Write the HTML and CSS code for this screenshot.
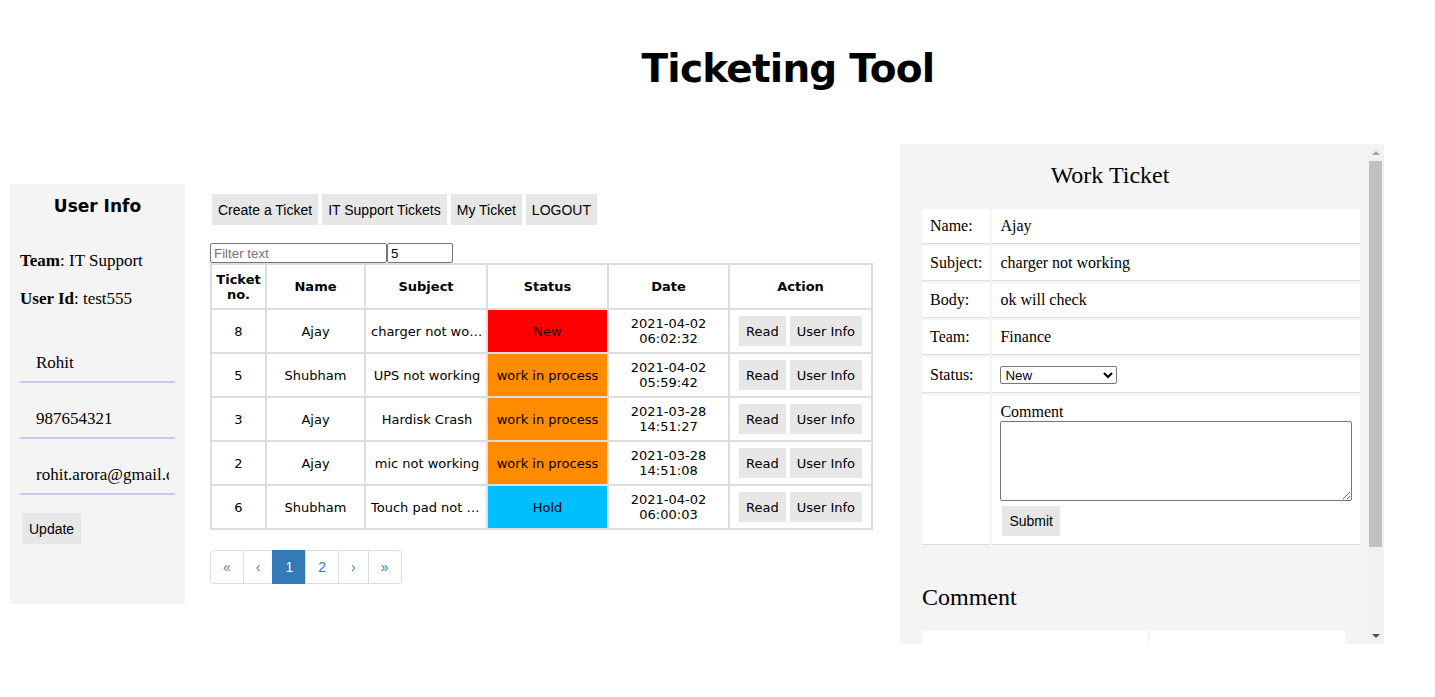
FILE: index.html
```html
<!DOCTYPE html>
<html lang="en">

<head>
    <meta charset="UTF-8">
    <meta name="viewport" content="width=device-width, initial-scale=1.0">
    <title>Ticketing Tool</title>
    <link rel="stylesheet" href="styles.css">
</head>

<body>
    <h1 class="title">Ticketing Tool</h1>

    <div class="main">
        <div class="userinfo">
            <h3>User Info</h3>
            <p><b>Team</b>: IT Support</p>
            <p class="userid"><b>User Id</b>: test555</p>
            <input class="field first" type="text" value="Rohit">
            <input class="field" type="text" value="987654321">
            <input class="field" type="text" value="rohit.arora@gmail.com">
            <button class="btn update">Update</button>
        </div>

        <div class="content">
            <div class="nav">
                <button class="btn">Create a Ticket</button>
                <button class="btn">IT Support Tickets</button>
                <button class="btn">My Ticket</button>
                <button class="btn">LOGOUT</button>
            </div>
            <div class="filter">
                <input class="filtertext" type="text" placeholder="Filter text">
                <input class="pagesize" type="text" value="5">
            </div>
            <table class="tickets">
                <colgroup>
                    <col style="width:55px">
                    <col style="width:99px">
                    <col style="width:122px">
                    <col style="width:121px">
                    <col style="width:121px">
                    <col style="width:143px">
                </colgroup>
                <tr>
                    <th>Ticket no.</th>
                    <th>Name</th>
                    <th>Subject</th>
                    <th>Status</th>
                    <th>Date</th>
                    <th>Action</th>
                </tr>
                <tr>
                    <td>8</td>
                    <td>Ajay</td>
                    <td class="subject">charger not working</td>
                    <td class="new">New</td>
                    <td>2021-04-02 06:02:32</td>
                    <td><button class="act">Read</button><button class="act">User Info</button></td>
                </tr>
                <tr>
                    <td>5</td>
                    <td>Shubham</td>
                    <td class="subject">UPS not working</td>
                    <td class="process">work in process</td>
                    <td>2021-04-02 05:59:42</td>
                    <td><button class="act">Read</button><button class="act">User Info</button></td>
                </tr>
                <tr>
                    <td>3</td>
                    <td>Ajay</td>
                    <td class="subject">Hardisk Crash</td>
                    <td class="process">work in process</td>
                    <td>2021-03-28 14:51:27</td>
                    <td><button class="act">Read</button><button class="act">User Info</button></td>
                </tr>
                <tr>
                    <td>2</td>
                    <td>Ajay</td>
                    <td class="subject">mic not working</td>
                    <td class="process">work in process</td>
                    <td>2021-03-28 14:51:08</td>
                    <td><button class="act">Read</button><button class="act">User Info</button></td>
                </tr>
                <tr>
                    <td>6</td>
                    <td>Shubham</td>
                    <td class="subject">Touch pad not working</td>
                    <td class="hold">Hold</td>
                    <td>2021-04-02 06:00:03</td>
                    <td><button class="act">Read</button><button class="act">User Info</button></td>
                </tr>
            </table>
            <ul class="pagination">
                <li class="disabled">&laquo;</li>
                <li class="disabled">&lsaquo;</li>
                <li class="active">1</li>
                <li>2</li>
                <li>&rsaquo;</li>
                <li>&raquo;</li>
            </ul>
        </div>

        <div class="work">
            <div class="workbody">
                <h2 class="worktitle">Work Ticket</h2>
                <table class="detail">
                    <tr>
                        <td class="label">Name:</td>
                        <td>Ajay</td>
                    </tr>
                    <tr>
                        <td class="label">Subject:</td>
                        <td>charger not working</td>
                    </tr>
                    <tr>
                        <td class="label">Body:</td>
                        <td>ok will check</td>
                    </tr>
                    <tr>
                        <td class="label">Team:</td>
                        <td>Finance</td>
                    </tr>
                    <tr>
                        <td class="label">Status:</td>
                        <td>
                            <select class="status">
                                <option>New</option>
                                <option>work in process</option>
                                <option>Hold</option>
                                <option>Closed</option>
                            </select>
                        </td>
                    </tr>
                    <tr>
                        <td class="label"></td>
                        <td class="commentcell">
                            <div>Comment</div>
                            <textarea class="commentbox"></textarea>
                            <button class="btn submit">Submit</button>
                        </td>
                    </tr>
                </table>
                <h2 class="commenttitle">Comment</h2>
                <table class="comments">
                    <tr>
                        <td class="who">Ajay</td>
                        <td>ok will check</td>
                    </tr>
                    <tr>
                        <td class="who">test555</td>
                        <td>checking</td>
                    </tr>
                </table>
            </div>
            <div class="scrollbar">
                <div class="sbbtn"><span class="arrowup"></span></div>
                <div class="sbtrack">
                    <div class="sbthumb"></div>
                </div>
                <div class="sbbtn"><span class="arrowdown"></span></div>
            </div>
        </div>
    </div>
</body>

</html>
```

FILE: styles.css
```css
body {
    margin: 0;
    font-family: "Liberation Serif", serif;
    font-size: 16px;
    color: #000;
}

.title {
    font-family: "DejaVu Sans", sans-serif;
    font-size: 39px;
    letter-spacing: -0.8px;
    line-height: 46px;
    text-align: center;
    margin: 46px 0 52px;
    padding-left: 141px;
}

.main {
    display: flex;
    align-items: flex-start;
    padding-left: 10px;
}

/* left user panel */
.userinfo {
    width: 175px;
    height: 420px;
    box-sizing: border-box;
    margin-top: 40px;
    padding: 12px 10px;
    background: #f4f4f4;
}

.userinfo h3 {
    margin: 0;
    font-family: "DejaVu Sans", sans-serif;
    font-size: 17px;
    line-height: 20px;
    text-align: center;
}

.userinfo p {
    margin: 35px 0 0;
    font-size: 17px;
    line-height: 19px;
}

.userinfo .userid {
    margin-top: 19px;
}

.field {
    display: block;
    width: 155px;
    height: 38px;
    box-sizing: border-box;
    margin: 18px 0 0;
    padding: 0 6px 0 16px;
    border: none;
    border-bottom: 2px solid #cfc6ec;
    background: transparent;
    font-family: "Liberation Serif", serif;
    font-size: 17px;
    color: #000;
    outline: none;
}

.field.first {
    margin-top: 37px;
}

.btn {
    height: 31px;
    padding: 0 7px;
    border: none;
    background: #e7e7e7;
    font-family: "Liberation Sans", Arial, sans-serif;
    font-size: 14px;
    color: #000;
    cursor: pointer;
}

.update {
    display: block;
    margin: 18px 0 0 2px;
}

/* middle ticket list */
.content {
    width: 663px;
    margin-left: 25px;
    margin-top: 50px;
}

.nav {
    display: flex;
    gap: 4px;
    padding-left: 2px;
}

.nav .btn {
    padding: 0 6px;
}

.filter {
    display: flex;
    margin-top: 18px;
}

.filter input {
    height: 20px;
    box-sizing: border-box;
    margin: 0;
    padding: 1px 3px;
    border: 1px solid #767676;
    border-radius: 2px;
    font-family: "Liberation Sans", Arial, sans-serif;
    font-size: 13.33px;
}

.filtertext {
    width: 177px;
}

.pagesize {
    width: 66px;
}

.filtertext::placeholder {
    color: #757575;
}

.tickets {
    width: 661px;
    table-layout: fixed;
    border-collapse: collapse;
    border: 2px solid #ddd;
    font-family: "DejaVu Sans", Verdana, sans-serif;
    font-size: 13px;
}

.tickets tr {
    height: 44px;
}

.tickets tr:first-child {
    height: 45px;
}

.tickets th,
.tickets td {
    border: 2px solid #ddd;
    padding: 4px 5px;
    text-align: center;
    line-height: 15px;
}

.tickets th {
    padding: 4px 2px;
}

.tickets .subject {
    padding: 4px 3px 4px 5px;
    white-space: nowrap;
    overflow: hidden;
    text-overflow: ellipsis;
}

.tickets .new {
    background: #ff0000;
}

.tickets .process {
    background: #ff8c00;
}

.tickets .hold {
    background: #00bfff;
}

.act {
    height: 30px;
    padding: 0 7px;
    margin: 0 2px;
    border: none;
    background: #e7e7e7;
    font-family: "DejaVu Sans", Verdana, sans-serif;
    font-size: 13px;
    color: #000;
    vertical-align: middle;
}

.pagination {
    display: flex;
    list-style: none;
    margin: 20px 0;
    padding: 0;
    font-family: "Liberation Sans", Arial, sans-serif;
    font-size: 14px;
}

.pagination li {
    padding: 6px 12px;
    line-height: 20px;
    border: 1px solid #ddd;
    margin-left: -1px;
    color: #337ab7;
    background: #fff;
    cursor: pointer;
}

.pagination li:first-child {
    margin-left: 0;
    border-radius: 4px 0 0 4px;
}

.pagination li:last-child {
    border-radius: 0 4px 4px 0;
}

.pagination li.disabled {
    color: #777;
}

.pagination li.active {
    background: #337ab7;
    border-color: #337ab7;
    color: #fff;
}

/* right work ticket panel */
.work {
    display: flex;
    width: 484px;
    height: 500px;
    margin-left: 27px;
    background: #f4f4f4;
}

.workbody {
    flex: 1;
    overflow: hidden;
    padding: 17px 0 0 20px;
}

.scrollbar {
    width: 17px;
    display: flex;
    flex-direction: column;
    background: #f1f1f1;
}

.sbbtn {
    height: 17px;
    display: flex;
    align-items: center;
    justify-content: center;
}

.arrowup {
    width: 0;
    height: 0;
    border-left: 4px solid transparent;
    border-right: 4px solid transparent;
    border-bottom: 4px solid #a3a3a3;
}

.arrowdown {
    width: 0;
    height: 0;
    border-left: 4px solid transparent;
    border-right: 4px solid transparent;
    border-top: 4px solid #505050;
}

.sbtrack {
    flex: 1;
}

.sbthumb {
    height: 386px;
    margin: 0 2px;
    background: #c1c1c1;
}

.worktitle {
    margin: 0 0 18px;
    padding-right: 67px;
    font-size: 24px;
    font-weight: normal;
    line-height: 28px;
    text-align: center;
}

.detail {
    width: 442px;
    border-spacing: 2px;
}

.detail td {
    background: #fff;
    border-bottom: 1px solid #ddd;
    padding: 8px 8px 8px;
    line-height: 18px;
}

.detail .label {
    width: 52px;
}

.status {
    width: 117px;
    height: 18px;
    font-family: "Liberation Sans", Arial, sans-serif;
    font-size: 13.33px;
    border: 1px solid #767676;
    border-radius: 2px;
    background: #fff;
    vertical-align: middle;
}

.commentcell div {
    line-height: 18px;
}

.commentbox {
    display: block;
    width: 100%;
    height: 80px;
    box-sizing: border-box;
    margin: 0;
    border: 1px solid #767676;
    border-radius: 2px;
    resize: vertical;
}

.submit {
    height: 30px;
    margin: 5px 0 0 2px;
}

.commenttitle {
    margin: 36px 0 18px 2px;
    font-size: 24px;
    font-weight: normal;
    line-height: 28px;
}

.comments {
    width: 427px;
    border-spacing: 2px;
}

.comments td {
    background: #fff;
    padding: 14px 8px;
    line-height: 18px;
}

.comments .who {
    width: 210px;
}
```
